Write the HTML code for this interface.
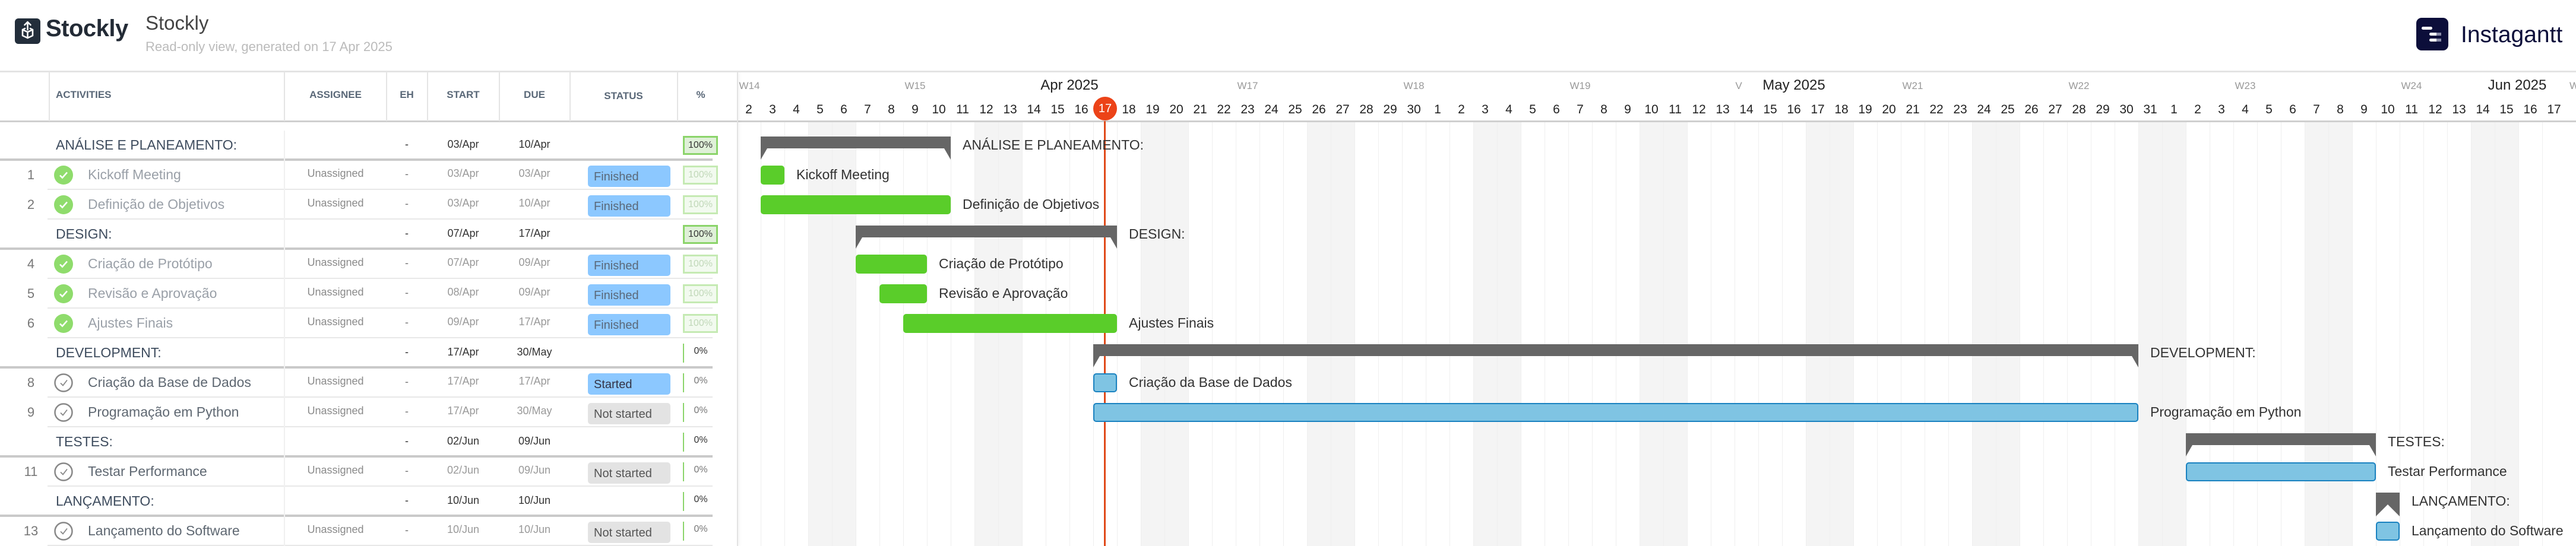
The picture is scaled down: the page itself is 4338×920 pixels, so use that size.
<!DOCTYPE html>
<html><head><meta charset="utf-8">
<style>
*{margin:0;padding:0;box-sizing:border-box}
body{width:4338px;height:920px;overflow:hidden;background:#fff;font-family:"Liberation Sans","Noto Sans CJK JP",sans-serif;position:relative}
.a{position:absolute;white-space:nowrap}
.hl{position:absolute;background:#e4e4e4}
.th{position:absolute;top:150px;font-size:17px;font-weight:bold;color:#5a6878;text-align:center}
.c{transform:translateX(-50%)}
</style></head><body>
<svg class="a" style="left:25px;top:31px" width="43" height="43" viewBox="0 0 43 43">
<rect width="43" height="43" rx="6" fill="#232e3b"/>
<g fill="none" stroke="#fff" stroke-width="2.6" stroke-linejoin="round" stroke-linecap="round">
<path d="M21.5 6v13M16.5 11l5-5 5 5"/>
<path d="M13 19l8.5 4 8.5-4M13 19v10l8.5 4 8.5-4V19M21.5 23v10M17 17l-4 2M26 17l4 2"/>
</g></svg>
<div class="a" style="left:77px;top:26px;font-size:40px;font-weight:bold;color:#232b36;letter-spacing:-0.5px">Stockly</div>
<div class="a" style="left:245px;top:20px;font-size:33px;color:#444">Stockly</div>
<div class="a" style="left:245px;top:66px;font-size:22px;color:#bbb">Read-only view, generated on 17 Apr 2025</div>
<svg class="a" style="left:4069px;top:30px" width="54" height="55" viewBox="0 0 54 55">
<rect width="54" height="55" rx="9" fill="#0c0e3a"/>
<rect x="9" y="15" width="18" height="5" rx="2.5" fill="#fff"/>
<rect x="22" y="25" width="16" height="5" rx="2.5" fill="#fff"/><rect x="34" y="25" width="8" height="5" fill="#8a8ca8"/>
<rect x="22" y="35" width="16" height="5" rx="2.5" fill="#fff"/><rect x="34" y="35" width="8" height="5" fill="#8a8ca8"/>
</svg>
<div class="a" style="left:4144px;top:37px;font-size:39px;color:#0c0e3a">Instagantt</div>

<div class="hl" style="left:0;top:119px;width:4338px;height:3px"></div>
<div class="hl" style="left:0;top:203px;width:4338px;height:3px;background:#cfcfcf"></div>
<div class="hl" style="left:82px;top:122px;width:2px;height:82px"></div>
<div class="hl" style="left:478px;top:122px;width:2px;height:82px"></div>
<div class="hl" style="left:650px;top:122px;width:2px;height:82px"></div>
<div class="hl" style="left:719px;top:122px;width:2px;height:82px"></div>
<div class="hl" style="left:840px;top:122px;width:2px;height:82px"></div>
<div class="hl" style="left:959px;top:122px;width:2px;height:82px"></div>
<div class="hl" style="left:1140px;top:122px;width:2px;height:82px"></div>
<div class="th" style="left:94px">ACTIVITIES</div>
<div class="th c" style="left:565px">ASSIGNEE</div>
<div class="th c" style="left:685px">EH</div>
<div class="th c" style="left:780px">START</div>
<div class="th c" style="left:900px">DUE</div>
<div class="th c" style="left:1050px;top:152px">STATUS</div>
<div class="th c" style="left:1180px">%</div>

<div id="g"></div>
<div id="t"></div>
<div class="a" style="left:1241px;top:122px;width:2px;height:798px;background:#e2e2e2;box-shadow:2px 0 4px rgba(0,0,0,.08)"></div>
<div class="hl" style="left:478px;top:220px;width:2px;height:700px;background:#f0f0f0"></div>

<script>
var g=document.getElementById('g'),h='';
function X(i){return 1241+i*40}
var labels=[];
for(var d=2;d<=30;d++)labels.push(d);
for(var d=1;d<=31;d++)labels.push(d);
for(var d=1;d<=17;d++)labels.push(d);
for(var i=0;i<labels.length;i++){
 var x=X(i);
 if(i%7==3||i%7==4)h+='<div class="a" style="left:'+x+'px;top:206px;width:40px;height:714px;background:#f4f4f4"></div>';
 h+='<div class="a" style="left:'+x+'px;top:206px;width:1px;height:714px;background:#efefef"></div>';
 if(i!=15)h+='<div class="a" style="left:'+(x+20)+'px;top:173px;font-size:21px;color:#222;transform:translateX(-50%)">'+labels[i]+'</div>';
}
var wk=[[1262,'W14'],[1541,'W15'],[2101,'W17'],[2381,'W18'],[2661,'W19'],[2928,'V'],[3221,'W21'],[3501,'W22'],[3781,'W23'],[4061,'W24'],[4335,'W']];
wk.forEach(function(w){h+='<div class="a" style="left:'+w[0]+'px;top:135px;font-size:17px;color:#999;transform:translateX(-50%)">'+w[1]+'</div>'});
[[1801,'Apr 2025'],[3021,'May 2025'],[4239,'Jun 2025']].forEach(function(m){h+='<div class="a" style="left:'+m[0]+'px;top:130px;font-size:24px;color:#222;background:#fff;padding:0 6px;transform:translateX(-50%)">'+m[1]+'</div>'});
h+='<div class="a" style="left:1859px;top:204px;width:3px;height:716px;background:#e04a1a"></div>';
h+='<div class="a" style="left:1841px;top:163px;width:40px;height:40px;border-radius:50%;background:#ec4318;color:#fff;font-size:20px;text-align:center;line-height:40px">17</div>';
var bars=[
 ['G',1,8,'ANÁLISE E PLANEAMENTO:'],['T',1,1,'Kickoff Meeting'],['T',1,8,'Definição de Objetivos'],
 ['G',5,15,'DESIGN:'],['T',5,7,'Criação de Protótipo'],['T',6,7,'Revisão e Aprovação'],['T',7,15,'Ajustes Finais'],
 ['G',15,58,'DEVELOPMENT:'],['B',15,15,'Criação da Base de Dados'],['B',15,58,'Programação em Python'],
 ['G',61,68,'TESTES:'],['B',61,68,'Testar Performance'],
 ['M',69,69,'LANÇAMENTO:'],['B',69,69,'Lançamento do Software']];
bars.forEach(function(b,k){
 var cy=245+50*k,x1=X(b[1]),x2=X(b[2]+1),w=x2-x1;
 if(b[0]=='G'){
  h+='<svg class="a" style="left:'+x1+'px;top:'+(cy-15)+'px" width="'+w+'" height="40"><polygon points="0,0 '+w+',0 '+w+',39 '+(w-11)+',20 11,20 0,39" fill="#666"/></svg>';
 }else if(b[0]=='M'){
  h+='<svg class="a" style="left:'+x1+'px;top:'+(cy-15)+'px" width="40" height="40"><polygon points="0,0 40,0 40,40 20,20 0,40" fill="#666"/></svg>';
 }else if(b[0]=='T'){
  h+='<div class="a" style="left:'+x1+'px;top:'+(cy-16)+'px;width:'+w+'px;height:32px;background:#5acd2a;border-radius:5px"></div>';
 }else{
  h+='<div class="a" style="left:'+x1+'px;top:'+(cy-16)+'px;width:'+w+'px;height:32px;background:#7fc4e3;border:2px solid #1a82c0;border-radius:5px"></div>';
 }
 h+='<div class="a" style="left:'+(x2+20)+'px;top:'+(cy-14)+'px;font-size:23px;color:#333">'+b[3]+'</div>';
});
g.innerHTML=h;
var rows=[
 ['g','ANÁLISE E PLANEAMENTO:','03/Apr','10/Apr','100%'],
 [1,'Kickoff Meeting','03/Apr','03/Apr','Finished'],
 [2,'Definição de Objetivos','03/Apr','10/Apr','Finished'],
 ['g','DESIGN:','07/Apr','17/Apr','100%'],
 [4,'Criação de Protótipo','07/Apr','09/Apr','Finished'],
 [5,'Revisão e Aprovação','08/Apr','09/Apr','Finished'],
 [6,'Ajustes Finais','09/Apr','17/Apr','Finished'],
 ['g','DEVELOPMENT:','17/Apr','30/May','0%'],
 [8,'Criação da Base de Dados','17/Apr','17/Apr','Started'],
 [9,'Programação em Python','17/Apr','30/May','Not started'],
 ['g','TESTES:','02/Jun','09/Jun','0%'],
 [11,'Testar Performance','02/Jun','09/Jun','Not started'],
 ['g','LANÇAMENTO:','10/Jun','10/Jun','0%'],
 [13,'Lançamento do Software','10/Jun','10/Jun','Not started']];
var t='';
rows.forEach(function(r,k){
 var cy=245+50*k,top=cy-25;
 function tx(x,s,st){t+='<div class="a c" style="left:'+x+'px;top:'+(cy-12)+'px;'+st+'">'+s+'</div>'}
 if(r[0]=='g'){
  t+='<div class="a" style="left:94px;top:'+(cy-14)+'px;font-size:23px;color:#3e4c5e">'+r[1]+'</div>';
  tx(685,'-','font-size:18px;color:#333');
  tx(780,r[2],'font-size:18px;color:#333');tx(900,r[3],'font-size:18px;color:#333');
  if(r[4]=='100%')t+='<div class="a" style="left:1150px;top:'+(cy-16)+'px;width:59px;height:32px;background:#dff0d8;border:3px solid #8bd46a;font-size:16px;color:#333;text-align:center;line-height:26px">100%</div>';
  else{t+='<div class="a" style="left:1150px;top:'+(cy-16)+'px;width:2px;height:32px;background:#8bd46a"></div>';tx(1180,'0%','font-size:16px;color:#333')}
  t+='<div class="a" style="left:0;top:'+(top+47)+'px;width:1200px;height:4px;background:#cacaca"></div>';
 }else{
  var fin=r[4]=='Finished';
  t+='<div class="a c" style="left:52px;top:'+(cy-13)+'px;font-size:22px;color:#777">'+r[0]+'</div>';
  if(fin)t+='<svg class="a" style="left:91px;top:'+(cy-16)+'px" width="32" height="32"><circle cx="16" cy="16" r="16" fill="#8fdc6c"/><path d="M10 16.5l4 4 8-9" stroke="#fff" stroke-width="2.5" fill="none"/></svg>';
  else t+='<svg class="a" style="left:91px;top:'+(cy-16)+'px" width="32" height="32"><circle cx="16" cy="16" r="14.5" fill="none" stroke="#888" stroke-width="2.5"/><path d="M11 16.5l4 4 7-9" stroke="#888" stroke-width="1.8" fill="none"/></svg>';
  t+='<div class="a" style="left:148px;top:'+(cy-14)+'px;font-size:23px;color:'+(fin?'#9aa0a8':'#5f6872')+'">'+r[1]+'</div>';
  tx(565,'Unassigned','font-size:18px;color:#8a8a8a;top:'+(cy-13)+'px');
  tx(685,'-','font-size:18px;color:#777');
  tx(780,r[2],'font-size:18px;color:#999;top:'+(cy-13)+'px');tx(900,r[3],'font-size:18px;color:#999;top:'+(cy-13)+'px');
  var bg=(r[4]=='Not started')?'#e3e3e3':'#8cc8ff',fc=(r[4]=='Started')?'#334':(r[4]=='Not started'?'#555':'#5a6878');
  t+='<div class="a" style="left:990px;top:'+(cy-16)+'px;width:139px;height:36px;border-radius:5px;background:'+bg+';color:'+fc+';font-size:20px;line-height:38px;padding-left:10px">'+r[4]+'</div>';
  if(fin)t+='<div class="a" style="left:1150px;top:'+(cy-16)+'px;width:59px;height:32px;background:#f2faef;border:3px solid #c5eab3;font-size:16px;color:#c0d8b8;text-align:center;line-height:26px">100%</div>';
  else{t+='<div class="a" style="left:1150px;top:'+(cy-16)+'px;width:2px;height:32px;background:#8bd46a"></div>';tx(1180,'0%','font-size:16px;color:#777')}
  t+='<div class="a" style="left:80px;top:'+(top+48)+'px;width:1120px;height:2px;background:#e8e8e8"></div>';
 }
});
document.getElementById('t').innerHTML=t;
</script>
</body></html>
